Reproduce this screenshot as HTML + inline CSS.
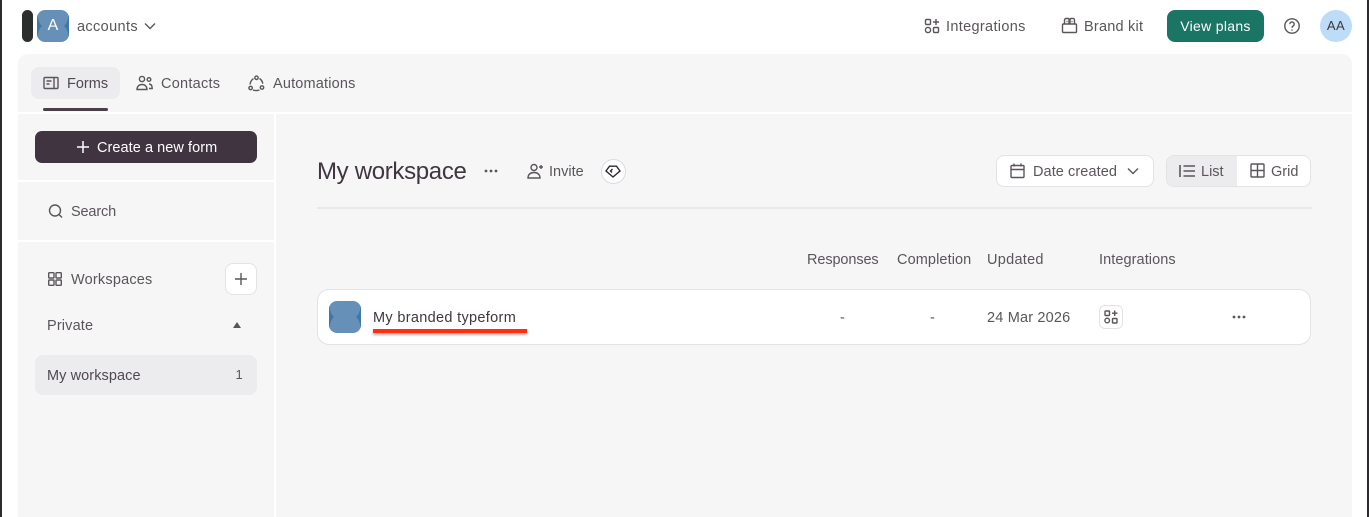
<!DOCTYPE html>
<html lang="en"><head><meta charset="utf-8"><title>Workspace</title>
<style>
html,body{margin:0;padding:0;background:#fff;}
body{position:relative;width:1369px;height:517px;overflow:hidden;font-family:"Liberation Sans",sans-serif;color:#5a555b;font-size:14px;}
.a{position:absolute;}
.t{position:absolute;white-space:nowrap;line-height:20px;height:20px;letter-spacing:0;font-size:14.500px;margin-top:1px;}
svg{position:absolute;fill:none;stroke:#5a555b;stroke-width:1.4;}
</style></head><body>
<div class="a" style="left:0;top:0;width:2px;height:517px;background:#2f2a30"></div>
<div class="a" style="left:1367px;top:0;width:2px;height:517px;background:#2f2a30"></div>

<div class="a" style="left:22px;top:10px;width:11px;height:32px;border-radius:6px;background:#2b2e2d"></div>
<svg style="left:37px;top:10px;stroke:none" width="32" height="32" viewBox="0 0 32 32"><rect width="32" height="32" rx="8" fill="#6790b8"/><path d="M0 5Q2 14 5 16Q2 18 0 27ZM32 5Q30 14 27 16Q30 18 32 27Z" fill="#3f78a8"/></svg>
<div class="a" style="left:37px;top:16px;width:32px;text-align:center;color:#fff;font-size:16px;line-height:20px">A</div>
<div class="t" style="left:77px;top:16px;letter-spacing:.37px">accounts</div>
<svg style="left:144px;top:21px" width="12" height="10" viewBox="0 0 12 10"><path d="M1 2.500l5 5 5-5"/></svg>

<svg style="left:924px;top:18px" width="16" height="16" viewBox="0 0 16 16"><rect x="1.500" y="1.500" width="5" height="5" rx="1"/><circle cx="4" cy="12" r="2.600"/><rect x="9.500" y="9.500" width="5" height="5" rx="1"/><path d="M12 1v6M9 4h6"/></svg>
<div class="t" style="left:946px;top:16px;letter-spacing:.33px">Integrations</div>
<svg style="left:1061px;top:17px" width="17" height="17" viewBox="0 0 17 17"><rect x="1.500" y="7" width="14" height="8.500" rx="1"/><path d="M3.500 7V3a1.500 1.500 0 0 1 1.500-1.500H7A1 1 0 0 1 8 2.500V7M9 7V2.500a1 1 0 0 1 1-1h1.500A1.500 1.500 0 0 1 13.500 3v4M5.500 4.500h1M10.500 4.500h1"/></svg>
<div class="t" style="left:1084px;top:16px;letter-spacing:.22px">Brand kit</div>
<div class="a" style="left:1167px;top:10px;width:97px;height:32px;border-radius:8px;background:#1a7565;color:#fff;text-align:center;line-height:32px;letter-spacing:.3px">View plans</div>
<svg style="left:1284px;top:18px" width="16" height="16" viewBox="0 0 16 16"><circle cx="8" cy="8" r="7.200"/><path d="M5.800 6.200a2.200 2.200 0 1 1 3.400 1.800c-.8.500-1.200 1-1.200 1.800"/><path d="M8 11.500v1.200"/></svg>
<div class="a" style="left:1320px;top:10px;width:32px;height:32px;border-radius:50%;background:#bcdcf8;color:#3f3540;text-align:center;line-height:32px;font-size:13px;letter-spacing:.5px">AA</div>

<!-- panels -->
<div class="a" style="left:18px;top:54px;width:1334px;height:58px;background:#f6f6f6;border-radius:10px 10px 0 0"></div>
<div class="a" style="left:18px;top:114px;width:256px;height:66px;background:#f6f6f6"></div>
<div class="a" style="left:18px;top:182px;width:256px;height:58px;background:#f6f6f6"></div>
<div class="a" style="left:18px;top:242px;width:256px;height:275px;background:#f6f6f6"></div>
<div class="a" style="left:276px;top:114px;width:1076px;height:403px;background:#f6f6f6"></div>

<!-- tabs -->
<div class="a" style="left:31px;top:67px;width:89px;height:32px;border-radius:8px;background:#ececee"></div>
<div class="a" style="left:43px;top:108px;width:65px;height:3px;border-radius:2px;background:#4b3f4a"></div>
<svg style="left:43px;top:76px" width="16" height="14" viewBox="0 0 16 14"><rect x="1" y="1.500" width="14" height="11" rx="1"/><path d="M11 1.500v11M3.500 5h5M3.500 8h3"/></svg>
<div class="t" style="left:67px;top:73px;color:#4f4850">Forms</div>
<svg style="left:136px;top:75px" width="17" height="16" viewBox="0 0 17 16"><circle cx="6" cy="4" r="2.600"/><circle cx="13" cy="4.500" r="1.800"/><path d="M1 14.500c0-3 2-5 5-5s5 2 5 5zM13 9c2 0 3.200 1.500 3.200 4.500H13"/></svg>
<div class="t" style="left:161px;top:73px;letter-spacing:.25px">Contacts</div>
<svg style="left:248px;top:75px" width="17" height="17" viewBox="0 0 17 17"><circle cx="8.500" cy="2.800" r="1.700"/><circle cx="2.600" cy="13" r="1.700"/><circle cx="14" cy="12.500" r="1.700"/><path d="M5.500 3.500C3.500 5 2.300 7 2 9.500M11.500 3.500c1.700 1.200 3 3 3.300 5.200M5 15c2 .8 4 .8 6.500 0"/></svg>
<div class="t" style="left:273px;top:73px;letter-spacing:.18px">Automations</div>

<!-- sidebar -->
<div class="a" style="left:35px;top:131px;width:222px;height:32px;border-radius:7px;background:#3f3440"></div>
<svg style="left:77px;top:141px;stroke:#fff;stroke-width:1.500" width="12" height="12" viewBox="0 0 12 12"><path d="M6 0v12M0 6h12"/></svg>
<div class="t" style="left:97px;top:137px;color:#fff;letter-spacing:.06px">Create a new form</div>
<svg style="left:48px;top:203px" width="15" height="16" viewBox="0 0 15 16"><circle cx="7" cy="7.500" r="5.500"/><path d="M11 11.500l3 3"/></svg>
<div class="t" style="left:71px;top:201px;letter-spacing:-.15px">Search</div>
<svg style="left:48px;top:272px" width="14" height="14" viewBox="0 0 14 14"><rect x=".7" y=".7" width="5.300" height="5.300" rx=".8"/><rect x="8" y=".7" width="5.300" height="5.300" rx=".8"/><rect x=".7" y="8" width="5.300" height="5.300" rx=".8"/><rect x="8" y="8" width="5.300" height="5.300" rx=".8"/></svg>
<div class="t" style="left:71px;top:269px;letter-spacing:.2px">Workspaces</div>
<div class="a" style="left:225px;top:263px;width:30px;height:30px;border:1px solid #e3e3e5;border-radius:8px;background:#fff"></div>
<svg style="left:235px;top:273px" width="12" height="12" viewBox="0 0 12 12"><path d="M6 0v12M0 6h12"/></svg>
<div class="t" style="left:47px;top:315px;letter-spacing:.15px">Private</div>
<div class="a" style="left:233px;top:322px;width:0;height:0;border-left:4px solid transparent;border-right:4px solid transparent;border-bottom:6px solid #5a555b"></div>
<div class="a" style="left:35px;top:355px;width:222px;height:40px;border-radius:8px;background:#ececee"></div>
<div class="t" style="left:47px;top:365px;color:#4f4850;letter-spacing:.08px">My workspace</div>
<div class="t" style="left:235.500px;top:365px;font-size:13px;margin-top:0">1</div>

<!-- header -->
<div class="t" style="left:317px;top:157px;height:30px;line-height:30px;font-size:24px;letter-spacing:-.32px;color:#3f3640;margin-top:0">My workspace</div>
<svg style="left:484px;top:168px;fill:#5a555b;stroke:none" width="14" height="6" viewBox="0 0 14 6"><circle cx="2" cy="3" r="1.400"/><circle cx="7" cy="3" r="1.400"/><circle cx="12" cy="3" r="1.400"/></svg>
<svg style="left:527px;top:163px" width="17" height="16" viewBox="0 0 17 16"><circle cx="7" cy="4.500" r="3"/><path d="M1 15c0-3.500 2.500-5.500 6-5.500s6 2 6 5.500zM12 4h4M14 2v4"/></svg>
<div class="t" style="left:549px;top:161px">Invite</div>
<div class="a" style="left:601px;top:159px;width:23px;height:23px;border:1px solid #d6dde6;border-radius:50%;background:#fff"></div>
<svg style="left:605px;top:165px;stroke:#2d2830;stroke-width:1.400" width="16" height="13" viewBox="0 0 16 13"><path d="M4.500 1.200h7L15 6l-7 6-7-6zM7.500 4l-2 2 1.500 1.500"/></svg>

<div class="a" style="left:996px;top:155px;width:156px;height:30px;border:1px solid #e3e3e5;border-radius:8px;background:#fff"></div>
<svg style="left:1010px;top:163px" width="15" height="16" viewBox="0 0 15 16"><rect x="1" y="2.500" width="13" height="12" rx="1"/><path d="M1 6.500h13M4 .5v3M11 .5v3"/></svg>
<div class="t" style="left:1033px;top:161px;letter-spacing:.08px">Date created</div>
<svg style="left:1127px;top:166px" width="12" height="10" viewBox="0 0 12 10"><path d="M1 2.500l5 5 5-5"/></svg>
<div class="a" style="left:1166px;top:155px;width:143px;height:30px;border:1px solid #e3e3e5;border-radius:8px;background:#fff;overflow:hidden"><div class="a" style="left:0;top:0;width:70px;height:30px;background:#ececee"></div></div>
<svg style="left:1179px;top:164px;stroke-width:1.600" width="16" height="14" viewBox="0 0 16 14"><path d="M1 1v12M4.500 2H16M4.500 7H16M4.500 12H16"/></svg>
<div class="t" style="left:1201px;top:161px">List</div>
<svg style="left:1250px;top:163px" width="15" height="15" viewBox="0 0 15 15"><rect x="1" y="1" width="13" height="13" rx="1"/><path d="M7.500 1v13M1 7.500h13"/></svg>
<div class="t" style="left:1271px;top:161px">Grid</div>
<div class="a" style="left:317px;top:207px;width:995px;height:2px;background:#e9e9e9"></div>

<!-- table -->
<div class="t" style="left:807px;top:249px;letter-spacing:-.11px">Responses</div>
<div class="t" style="left:897px;top:249px;letter-spacing:.1px">Completion</div>
<div class="t" style="left:987px;top:249px;letter-spacing:.28px">Updated</div>
<div class="t" style="left:1099px;top:249px;letter-spacing:.08px">Integrations</div>

<div class="a" style="left:317px;top:289px;width:992px;height:54px;border:1px solid #e3e3e5;border-radius:12px;background:#fff"></div>
<svg style="left:329px;top:301px;stroke:none" width="32" height="32" viewBox="0 0 32 32"><rect width="32" height="32" rx="8" fill="#6790b8"/><path d="M0 5Q2 14 5 16Q2 18 0 27ZM32 5Q30 14 27 16Q30 18 32 27Z" fill="#3f78a8"/></svg>
<div class="t" style="left:373px;top:307px;color:#3f3640;letter-spacing:.32px">My branded typeform</div>
<div class="a" style="left:373px;top:329px;width:154px;height:4px;background:#ff2f0c;box-shadow:0 2px 2px rgba(80,80,80,.45)"></div>
<div class="t" style="left:840px;top:307px">-</div>
<div class="t" style="left:930px;top:307px">-</div>
<div class="t" style="left:987px;top:307px;letter-spacing:.18px">24 Mar 2026</div>
<div class="a" style="left:1099px;top:305px;width:22px;height:22px;border:1px solid #e3e3e5;border-radius:6px"></div>
<svg style="left:1104px;top:310px" width="14" height="14" viewBox="0 0 14 14"><rect x="1" y="1" width="4.500" height="4.500" rx=".8"/><circle cx="3.200" cy="10.500" r="2.300"/><rect x="8.500" y="8.500" width="4.500" height="4.500" rx=".8"/><path d="M10.700 .5v5.500M8 3.200h5.500"/></svg>
<svg style="left:1232px;top:314px;fill:#5a555b;stroke:none" width="14" height="6" viewBox="0 0 14 6"><circle cx="2" cy="3" r="1.400"/><circle cx="7" cy="3" r="1.400"/><circle cx="12" cy="3" r="1.400"/></svg>
</body></html>
